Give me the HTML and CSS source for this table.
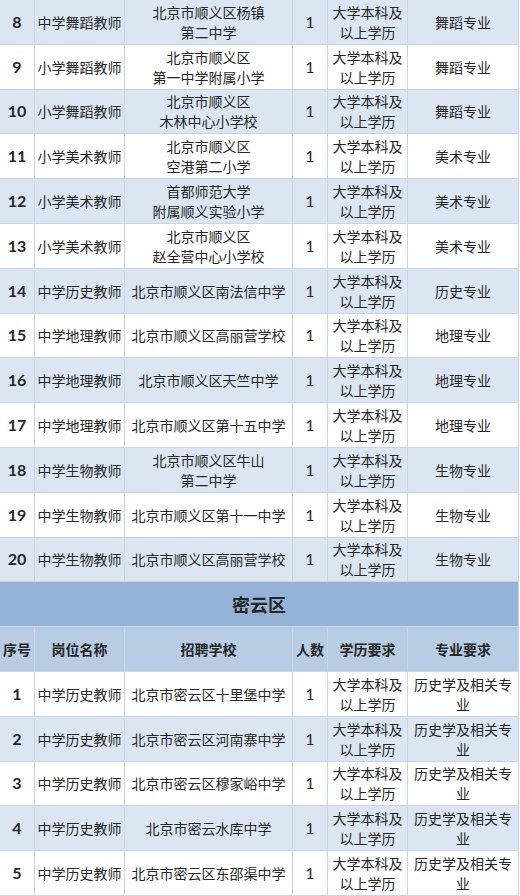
FILE: index.html
```html
<!DOCTYPE html>
<html lang="zh-CN">
<head>
<meta charset="utf-8">
<title>招聘岗位</title>
<link rel="stylesheet" href="styles.css">
</head>
<body>
<table class="jobs">
  <colgroup>
    <col class="c-no"><col class="c-post"><col class="c-school"><col class="c-num"><col class="c-edu"><col class="c-major">
  </colgroup>
  <tbody>
    <tr class="alt"><td class="no">8</td><td>中学舞蹈教师</td><td>北京市顺义区杨镇<br>第二中学</td><td class="num">1</td><td>大学本科及以上学历</td><td>舞蹈专业</td></tr>
    <tr><td class="no">9</td><td>小学舞蹈教师</td><td>北京市顺义区<br>第一中学附属小学</td><td class="num">1</td><td>大学本科及以上学历</td><td>舞蹈专业</td></tr>
    <tr class="alt"><td class="no">10</td><td>小学舞蹈教师</td><td>北京市顺义区<br>木林中心小学校</td><td class="num">1</td><td>大学本科及以上学历</td><td>舞蹈专业</td></tr>
    <tr><td class="no">11</td><td>小学美术教师</td><td>北京市顺义区<br>空港第二小学</td><td class="num">1</td><td>大学本科及以上学历</td><td>美术专业</td></tr>
    <tr class="alt"><td class="no">12</td><td>小学美术教师</td><td>首都师范大学<br>附属顺义实验小学</td><td class="num">1</td><td>大学本科及以上学历</td><td>美术专业</td></tr>
    <tr><td class="no">13</td><td>小学美术教师</td><td>北京市顺义区<br>赵全营中心小学校</td><td class="num">1</td><td>大学本科及以上学历</td><td>美术专业</td></tr>
    <tr class="alt"><td class="no">14</td><td>中学历史教师</td><td>北京市顺义区南法信中学</td><td class="num">1</td><td>大学本科及以上学历</td><td>历史专业</td></tr>
    <tr><td class="no">15</td><td>中学地理教师</td><td>北京市顺义区高丽营学校</td><td class="num">1</td><td>大学本科及以上学历</td><td>地理专业</td></tr>
    <tr class="alt"><td class="no">16</td><td>中学地理教师</td><td>北京市顺义区天竺中学</td><td class="num">1</td><td>大学本科及以上学历</td><td>地理专业</td></tr>
    <tr><td class="no">17</td><td>中学地理教师</td><td>北京市顺义区第十五中学</td><td class="num">1</td><td>大学本科及以上学历</td><td>地理专业</td></tr>
    <tr class="alt"><td class="no">18</td><td>中学生物教师</td><td>北京市顺义区牛山<br>第二中学</td><td class="num">1</td><td>大学本科及以上学历</td><td>生物专业</td></tr>
    <tr><td class="no">19</td><td>中学生物教师</td><td>北京市顺义区第十一中学</td><td class="num">1</td><td>大学本科及以上学历</td><td>生物专业</td></tr>
    <tr class="alt"><td class="no">20</td><td>中学生物教师</td><td>北京市顺义区高丽营学校</td><td class="num">1</td><td>大学本科及以上学历</td><td>生物专业</td></tr>
    <tr class="section"><td colspan="6">密云区</td></tr>
    <tr class="head"><td>序号</td><td>岗位名称</td><td>招聘学校</td><td>人数</td><td>学历要求</td><td>专业要求</td></tr>
    <tr><td class="no">1</td><td>中学历史教师</td><td>北京市密云区十里堡中学</td><td class="num">1</td><td>大学本科及以上学历</td><td>历史学及相关专业</td></tr>
    <tr class="alt"><td class="no">2</td><td>中学历史教师</td><td>北京市密云区河南寨中学</td><td class="num">1</td><td>大学本科及以上学历</td><td>历史学及相关专业</td></tr>
    <tr><td class="no">3</td><td>中学历史教师</td><td>北京市密云区穆家峪中学</td><td class="num">1</td><td>大学本科及以上学历</td><td>历史学及相关专业</td></tr>
    <tr class="alt"><td class="no">4</td><td>中学历史教师</td><td>北京市密云水库中学</td><td class="num">1</td><td>大学本科及以上学历</td><td>历史学及相关专业</td></tr>
    <tr><td class="no">5</td><td>中学历史教师</td><td>北京市密云区东邵渠中学</td><td class="num">1</td><td>大学本科及以上学历</td><td>历史学及相关专业</td></tr>
  </tbody>
</table>
</body>
</html>
```

FILE: styles.css
```css
html, body {
  margin: 0;
  padding: 0;
  background: #ffffff;
}

body {
  width: 520px;
  overflow: hidden;
  font-family: "Noto Sans CJK SC", "Noto Sans", sans-serif;
  color: #262626;
}

.jobs {
  border-collapse: collapse;
  table-layout: fixed;
  width: 519px;
  margin-top: -1px;
  margin-left: -1px;
}

.c-no { width: 35px; }
.c-post { width: 90px; }
.c-school { width: 168px; }
.c-num { width: 35px; }
.c-edu { width: 80px; }
.c-major { width: 111px; }

.jobs td {
  border: 1px solid #c9d5e4;
  height: 44.8px;
  padding: 0 2px;
  box-sizing: border-box;
  text-align: center;
  vertical-align: middle;
  font-size: 14px;
  line-height: 20px;
  background: #ffffff;
}

.jobs tr.alt td {
  background: #dce6f2;
}

.jobs td.no {
  font-family: Lato, "Liberation Sans", sans-serif;
  font-weight: 700;
  font-size: 16px;
  padding: 0;
}

.jobs td.num {
  font-family: Lato, "Liberation Sans", sans-serif;
  font-size: 16px;
  padding: 0;
}

.jobs tr.section td {
  background: #95b3d7;
  font-weight: 700;
  font-size: 18px;
}

.jobs tr.head td {
  background: #b8cce4;
  font-weight: 700;
  font-size: 14px;
}
```
